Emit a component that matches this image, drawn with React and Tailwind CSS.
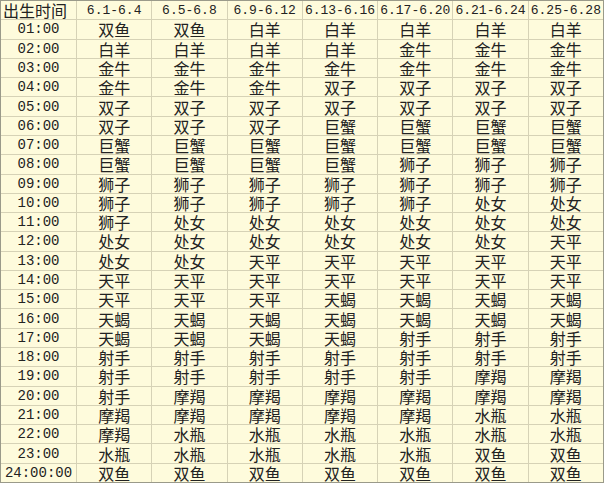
import React from "react";

const cols = ["6.1-6.4", "6.5-6.8", "6.9-6.12", "6.13-6.16", "6.17-6.20", "6.21-6.24", "6.25-6.28"];

const raw = `01:00 双鱼 双鱼 白羊 白羊 白羊 白羊 白羊
02:00 白羊 白羊 白羊 白羊 金牛 金牛 金牛
03:00 金牛 金牛 金牛 金牛 金牛 金牛 金牛
04:00 金牛 金牛 金牛 双子 双子 双子 双子
05:00 双子 双子 双子 双子 双子 双子 双子
06:00 双子 双子 双子 巨蟹 巨蟹 巨蟹 巨蟹
07:00 巨蟹 巨蟹 巨蟹 巨蟹 巨蟹 巨蟹 巨蟹
08:00 巨蟹 巨蟹 巨蟹 巨蟹 狮子 狮子 狮子
09:00 狮子 狮子 狮子 狮子 狮子 狮子 狮子
10:00 狮子 狮子 狮子 狮子 狮子 处女 处女
11:00 狮子 处女 处女 处女 处女 处女 处女
12:00 处女 处女 处女 处女 处女 处女 天平
13:00 处女 处女 天平 天平 天平 天平 天平
14:00 天平 天平 天平 天平 天平 天平 天平
15:00 天平 天平 天平 天蝎 天蝎 天蝎 天蝎
16:00 天蝎 天蝎 天蝎 天蝎 天蝎 天蝎 天蝎
17:00 天蝎 天蝎 天蝎 天蝎 射手 射手 射手
18:00 射手 射手 射手 射手 射手 射手 射手
19:00 射手 射手 射手 射手 射手 摩羯 摩羯
20:00 射手 摩羯 摩羯 摩羯 摩羯 摩羯 摩羯
21:00 摩羯 摩羯 摩羯 摩羯 摩羯 水瓶 水瓶
22:00 摩羯 水瓶 水瓶 水瓶 水瓶 水瓶 水瓶
23:00 水瓶 水瓶 水瓶 水瓶 水瓶 双鱼 双鱼
24:00:00 双鱼 双鱼 双鱼 双鱼 双鱼 双鱼 双鱼`;

const rows = raw.split("\n").map((l) => l.trim().split(/\s+/));

export default function App() {
  return (
    <div lang="zh-CN" className="w-[605px] h-[484px] bg-white">
      <div className="w-[604px] h-[483px] border border-[#9a9a8a] bg-[#d6d2b6] grid grid-cols-[75px_repeat(7,1fr)] grid-rows-[repeat(25,1fr)] gap-px text-[#222] font-['Noto_Sans_CJK_SC','Noto_Sans_CJK_JP',sans-serif]">
        <div className="bg-[#fefbdc] flex items-center pl-[2px] text-[16px] leading-none whitespace-nowrap">出生时间</div>
        {cols.map((c) => (
          <div key={c} className="bg-[#fefbdc] flex items-center justify-center text-[13px] leading-none whitespace-nowrap overflow-hidden font-['Liberation_Mono',monospace]">
            {c}
          </div>
        ))}
        {rows.map((r) => (
          <React.Fragment key={r[0]}>
            <div className="bg-[#fefbdc] flex items-center justify-center text-[14px] leading-none whitespace-nowrap font-['Liberation_Mono',monospace]">
              {r[0]}
            </div>
            {r.slice(1).map((s, i) => (
              <div key={i} className="bg-[#fefbdc] flex items-center justify-center text-[16px] leading-none whitespace-nowrap">
                {s}
              </div>
            ))}
          </React.Fragment>
        ))}
      </div>
    </div>
  );
}
